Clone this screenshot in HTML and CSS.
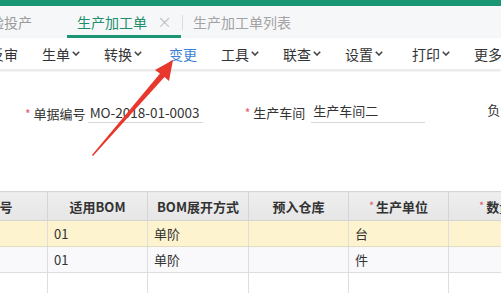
FILE: index.html
```html
<!DOCTYPE html>
<html lang="zh-CN">
<head>
<meta charset="utf-8">
<title>生产加工单</title>
<link rel="stylesheet" href="styles.css">
</head>
<body>
<div class="page">
  <div class="topbar"></div>
  <div class="tabs">
    <div class="tab tab-cut">验投产</div>
    <div class="tab tab-active">生产加工单<span class="close">×</span></div>
    <div class="tab-sep"></div>
    <div class="tab tab-muted">生产加工单列表</div>
  </div>
  <div class="toolbar">
    <div class="tool tool-cut">反审</div>
    <div class="sep"></div>
    <div class="tool">生单<svg class="chev" viewBox="0 0 8 5"><polyline points="0.8,0.8 4,4 7.2,0.8"/></svg></div>
    <div class="tool">转换<svg class="chev" viewBox="0 0 8 5"><polyline points="0.8,0.8 4,4 7.2,0.8"/></svg></div>
    <div class="sep sep-wide"></div>
    <div class="tool tool-blue">变更</div>
    <div class="sep"></div>
    <div class="tool">工具<svg class="chev" viewBox="0 0 8 5"><polyline points="0.8,0.8 4,4 7.2,0.8"/></svg></div>
    <div class="tool">联查<svg class="chev" viewBox="0 0 8 5"><polyline points="0.8,0.8 4,4 7.2,0.8"/></svg></div>
    <div class="tool">设置<svg class="chev" viewBox="0 0 8 5"><polyline points="0.8,0.8 4,4 7.2,0.8"/></svg></div>
    <div class="sep sep-wider"></div>
    <div class="tool">打印<svg class="chev" viewBox="0 0 8 5"><polyline points="0.8,0.8 4,4 7.2,0.8"/></svg></div>
    <div class="tool">更多</div>
  </div>
  <div class="form">
    <div class="field">
      <span class="req">*</span><span class="label">单据编号</span><span class="input input-code">MO-2018-01-0003</span>
    </div>
    <div class="field field-2">
      <span class="req">*</span><span class="label">生产车间</span><span class="input input-ws">生产车间二</span>
    </div>
    <div class="field field-3">
      <span class="label">负责人</span>
    </div>
  </div>
  <table class="grid">
    <colgroup>
      <col class="c1"><col class="c2"><col class="c3"><col class="c4"><col class="c5"><col class="c6">
    </colgroup>
    <thead>
      <tr>
        <th>物料编号</th>
        <th>适用BOM</th>
        <th>BOM展开方式</th>
        <th>预入仓库</th>
        <th><span class="hreq">*</span>生产单位</th>
        <th class="last"><span class="hreq">*</span>数量</th>
      </tr>
    </thead>
    <tbody>
      <tr class="row-sel">
        <td></td><td>01</td><td>单阶</td><td></td><td>台</td><td></td>
      </tr>
      <tr class="row-alt">
        <td></td><td>01</td><td>单阶</td><td></td><td>件</td><td></td>
      </tr>
      <tr class="row-empty">
        <td></td><td></td><td></td><td></td><td></td><td></td>
      </tr>
    </tbody>
  </table>
  <svg class="arrow" viewBox="0 0 501 293" width="501" height="293">
    <polygon points="173,60 169,81 164.5,77 93,156 92,155 160,73.5 155,70"/>
  </svg>
</div>
</body>
</html>
```
FILE: styles.css
```css
html, body {
  margin: 0;
  padding: 0;
  background: #ffffff;
}
body {
  width: 501px;
  height: 293px;
  overflow: hidden;
  font-family: "Noto Sans CJK SC", "Microsoft YaHei", sans-serif;
  color: #333;
}
.page {
  position: relative;
  width: 501px;
  height: 293px;
  overflow: hidden;
}
.topbar {
  height: 6px;
  background: #1b9674;
}
.tabs {
  height: 32px;
  background: #f6f7f8;
  display: flex;
  align-items: stretch;
  white-space: nowrap;
}
.tab {
  display: flex;
  align-items: center;
  font-size: 14px;
  line-height: 14px;
  color: #999;
  box-sizing: border-box;
  padding-bottom: 1px;
}
.tab-cut {
  margin-left: -10px;
  width: 77px;
  color: #9a9a9a;
}
.tab-active {
  width: 114px;
  padding-left: 10px;
  color: #1d8f6c;
  border-bottom: 3px solid #1b9674;
  padding-bottom: 0;
  padding-top: 3px;
}
.close {
  margin-left: 10px;
  font-size: 18px;
  color: #b8b8b8;
  font-family: "DejaVu Sans", sans-serif;
  font-weight: 300;
}
.tab-sep {
  width: 1px;
  background: #dcdcdc;
  margin: 9px 0 8px 1px;
}
.tab-muted {
  padding-left: 10px;
  color: #a3a3a3;
}
.toolbar {
  height: 32px;
  display: flex;
  align-items: center;
  background: #fff;
  box-shadow: 0 1px 2px rgba(0, 0, 0, 0.12);
  border-bottom: 1px solid #ececec;
  box-sizing: border-box;
  white-space: nowrap;
  position: relative;
}
.tool {
  display: flex;
  align-items: center;
  padding: 0 12px;
  font-size: 14px;
  line-height: 14px;
  color: #333;
}
.tool-cut {
  margin-left: -22px;
}
.tool-blue {
  color: #3d7fd6;
}
.chev {
  width: 8px;
  height: 5px;
  margin-left: 2px;
  fill: none;
  stroke: #444;
  stroke-width: 1.6;
}
.sep {
  width: 1px;
  height: 15px;
  background: #dcdcdc;
}
.sep-wide {
  margin: 0 1px 0 2px;
}
.sep-wider {
  margin: 0 3px 0 2px;
}
.form {
  display: flex;
  align-items: flex-end;
  padding: 30px 0 0 25px;
  font-size: 13px;
  white-space: nowrap;
}
.field {
  display: flex;
  align-items: center;
}
.req {
  color: #e0596b;
  font-size: 12px;
  margin-right: 3px;
  padding-top: 1px;
}
.label {
  color: #333;
  margin-right: 2px;
}
.input {
  display: block;
  height: 19px;
  line-height: 19px;
  border-bottom: 1px solid #d6d6d6;
  padding-left: 2px;
  color: #333;
  font-size: 13px;
}
.input-code {
  width: 113px;
  font-size: 13.5px;
}
.input-ws {
  width: 112px;
  margin-left: 4px;
  height: 21px;
}
.field-2 {
  margin-left: 42px;
}
.field-3 {
  margin-left: 62px;
  margin-bottom: 4px;
}
.grid {
  margin-top: 68px;
  margin-left: -75px;
  border-collapse: collapse;
  table-layout: fixed;
  width: 676px;
  font-size: 13px;
}
.c1 { width: 122px; }
.c2 { width: 100px; }
.c3 { width: 101px; }
.c4 { width: 100px; }
.c5 { width: 100px; }
.c6 { width: 153px; }
.grid th {
  height: 28px;
  padding: 0;
  background: linear-gradient(#eeeeee, #e6e6e6);
  border: 1px solid #d4d4d4;
  font-weight: bold;
  text-align: center;
  color: #333;
  white-space: nowrap;
}
.grid th.last {
  text-align: left;
  padding-left: 30px;
}
.hreq {
  color: #e0596b;
  font-weight: normal;
  font-size: 11px;
  margin-right: 2px;
  vertical-align: 2px;
}
.grid td {
  height: 25px;
  padding: 0 0 0 6px;
  border: 1px solid #dedede;
  border-top: none;
  color: #333;
  white-space: nowrap;
}
.row-sel td {
  background: #fdf3cf;
  border-bottom-color: #e3dcc0;
}
.row-alt td {
  background: #f9f9fb;
}
.row-empty td {
  background: #fff;
  height: 24px;
}
.arrow {
  position: absolute;
  left: 0;
  top: 0;
  pointer-events: none;
}
.arrow polygon {
  fill: #e8372c;
}
```
